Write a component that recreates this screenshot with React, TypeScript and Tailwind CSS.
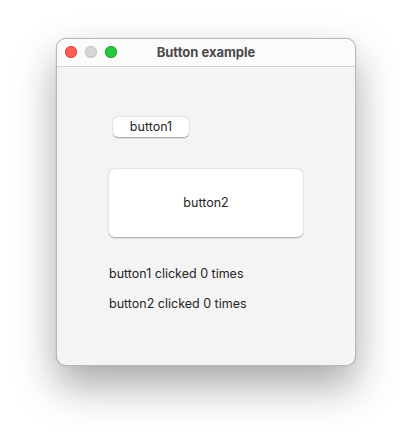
export default function App() {
  return (
    <div className="min-h-[440px] w-[412px] bg-white pl-[56px] pt-[38px] font-['Inter','Liberation_Sans',sans-serif]">
      {/* Window */}
      <div className="flex h-[328px] w-[300px] flex-col overflow-hidden rounded-[10px] border border-[#b8b8b8] bg-[#f4f4f4] shadow-[0_20px_40px_rgba(0,0,0,0.34),0_0_1px_rgba(0,0,0,0.3)]">
        {/* Title bar */}
        <div className="relative flex h-[28px] shrink-0 items-center justify-center border-b border-[#d4d4d4] bg-[#fbfbfb]">
          <div className="absolute left-[8px] top-[7px] flex gap-[8px]">
            <span className="h-[12px] w-[12px] rounded-full bg-[#fe5f57] ring-1 ring-inset ring-[#e24b41]" />
            <span className="h-[12px] w-[12px] rounded-full bg-[#d6d6d6] ring-1 ring-inset ring-[#c4c4c4]" />
            <span className="h-[12px] w-[12px] rounded-full bg-[#28c840] ring-1 ring-inset ring-[#1aab29]" />
          </div>
          <span className="text-[13px] font-bold text-[#4a4a4a]">Button example</span>
        </div>

        {/* Content */}
        <div className="flex flex-col items-start pl-[52px] pt-[50px]">
          <button className="ml-[4px] flex h-[20px] w-[76px] items-center justify-center rounded-[5px] bg-white text-[12.5px] text-[#262626] shadow-[0_0.5px_1.5px_rgba(0,0,0,0.35)]">
            button1
          </button>
          <button className="mt-[32px] flex h-[68px] w-[194px] items-center justify-center rounded-[6px] bg-white text-[12.5px] text-[#262626] shadow-[0_0.5px_1.5px_rgba(0,0,0,0.35)]">
            button2
          </button>
          <div className="mt-[29px] text-[12.5px] leading-[16px] text-[#262626]">button1 clicked 0 times</div>
          <div className="mt-[14px] text-[12.5px] leading-[16px] text-[#262626]">button2 clicked 0 times</div>
        </div>
      </div>
    </div>
  );
}
